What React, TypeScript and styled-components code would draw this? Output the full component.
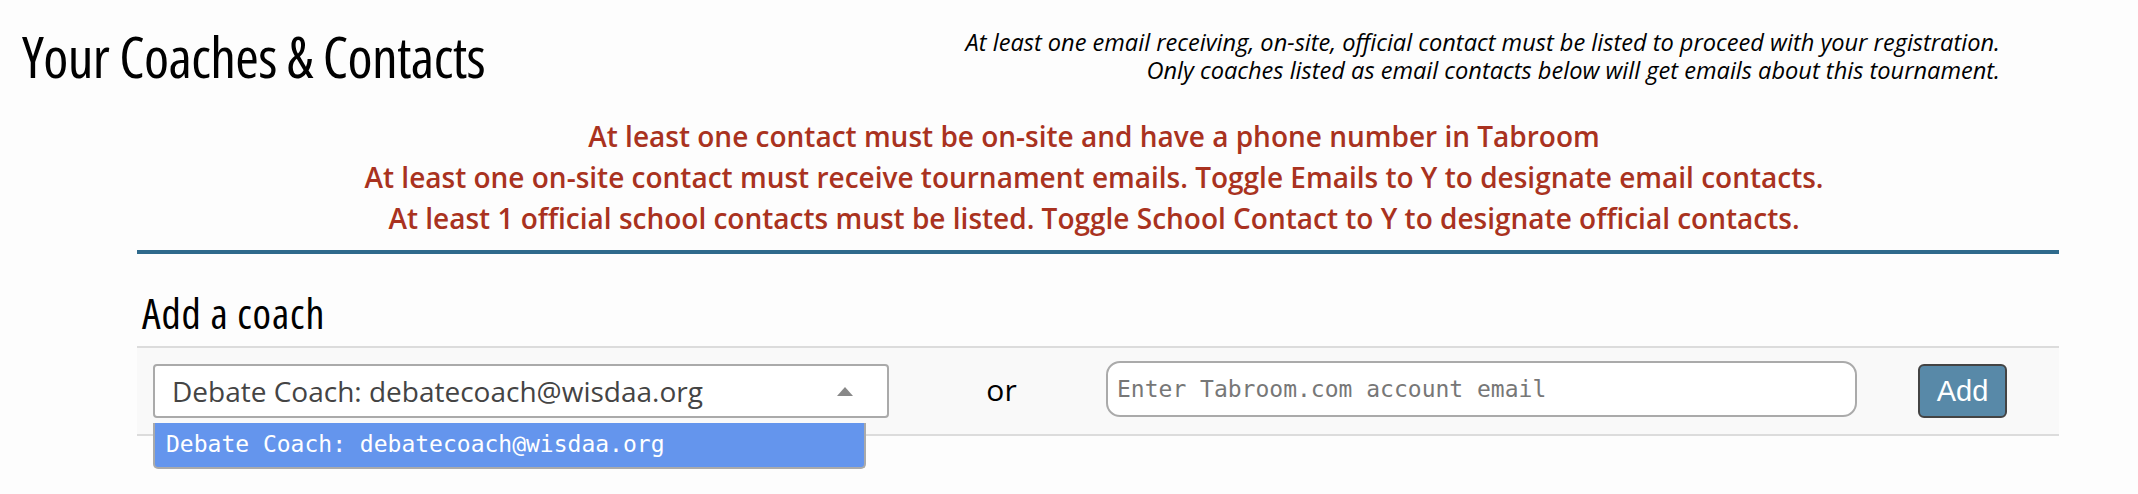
import React from "react";
import styled, { createGlobalStyle } from "styled-components";

const Global = createGlobalStyle`
  html, body { margin: 0; padding: 0; background: #fdfdfd; }
  body { font-family: "Open Sans", "Liberation Sans", sans-serif; color: #000; }
`;

const Page = styled.div`
  width: 2138px;
  min-height: 494px;
  box-sizing: border-box;
  padding-top: 22px;
`;

const Header = styled.div`
  display: flex;
  justify-content: space-between;
  align-items: flex-start;
  padding: 0 138px 0 22px;
`;

const Title = styled.h2`
  margin: 0;
  font-family: "Open Sans", sans-serif;
  font-stretch: 75%;
  font-weight: 400;
  font-size: 57px;
  line-height: 68px;
  letter-spacing: -0.6px;
  color: #000;
`;

const Note = styled.div`
  margin-top: 6px;
  text-align: right;
  font-style: italic;
  font-size: 23.6px;
  line-height: 28px;
  color: #000;
`;

const Content = styled.div`
  width: 1922px;
  margin-left: 137px;
`;

const Warnings = styled.div`
  margin-top: 26px;
  padding: 0 8px 0 0;
  text-align: center;
  color: #a93220;
  font-weight: 600;
  font-size: 28px;
  line-height: 41px;
`;

const Rule = styled.hr`
  margin: 11px 0 0 0;
  border: 0;
  height: 4px;
  background: #2f6a8c;
`;

const SubTitle = styled.h4`
  margin: 34px 0 0 5px;
  font-family: "Open Sans", sans-serif;
  font-stretch: 75%;
  font-weight: 400;
  font-size: 42px;
  line-height: 50px;
  letter-spacing: 0.9px;
`;

const Row = styled.div`
  margin-top: 8px;
  height: 86px;
  display: flex;
  align-items: center;
  padding-left: 16px;
  background: #f9f9f9;
  border-top: 2px solid #dcdcdc;
  border-bottom: 2px solid #dcdcdc;
`;

const SelectBox = styled.div`
  box-sizing: border-box;
  width: 736px;
  height: 54px;
  background: #fff;
  border: 2px solid #aaa;
  border-radius: 4px;
  display: flex;
  align-items: center;
  justify-content: space-between;
  padding: 0 34px 0 17px;
  font-size: 28px;
  color: #444;
  position: relative;
`;

const Arrow = styled.span`
  width: 0;
  height: 0;
  border-left: 8px solid transparent;
  border-right: 8px solid transparent;
  border-bottom: 9px solid #888;
`;

const Dropdown = styled.div`
  position: absolute;
  top: 57px;
  left: -2px;
  z-index: 2;
  box-sizing: border-box;
  width: 713px;
  height: 46px;
  background: #6495ed;
  border: 2px solid #aaa;
  border-top: 0;
  border-radius: 0 0 5px 5px;
  color: #fff;
  font-family: "DejaVu Sans Mono", monospace;
  font-size: 23px;
  line-height: 42px;
  padding-left: 11px;
  white-space: nowrap;
`;

const OrCell = styled.div`
  box-sizing: border-box;
  width: 217px;
  padding: 0 0 4px 8px;
  text-align: center;
  font-size: 30px;
  color: #000;
`;

const EmailInput = styled.input`
  box-sizing: border-box;
  width: 751px;
  height: 56px;
  margin-top: -4px;
  border: 2px solid #aaa;
  border-radius: 14px;
  background: #fff;
  padding: 0 0 0 9px;
  font-family: "DejaVu Sans Mono", monospace;
  font-size: 23px;
  outline: none;
  &::placeholder { color: #777; }
`;

const AddButton = styled.button`
  box-sizing: border-box;
  margin-left: 61px;
  width: 89px;
  height: 54px;
  border: 2px solid #444;
  border-radius: 6px;
  background: #5889a8;
  color: #fff;
  font-family: "Liberation Sans", Arial, sans-serif;
  font-size: 29px;
  padding: 0;
`;

export default function App() {
  return (
    <Page>
      <Global />
      <Header>
        <Title>Your Coaches &amp; Contacts</Title>
        <Note>
          At least one email receiving, on-site, official contact must be listed to proceed with your registration.
          <br />
          Only coaches listed as email contacts below will get emails about this tournament.
        </Note>
      </Header>
      <Content>
        <Warnings>
          <div>At least one contact must be on-site and have a phone number in Tabroom</div>
          <div>At least one on-site contact must receive tournament emails. Toggle Emails to Y to designate email contacts.</div>
          <div>At least 1 official school contacts must be listed. Toggle School Contact to Y to designate official contacts.</div>
        </Warnings>
        <Rule />
        <SubTitle>Add a coach</SubTitle>
        <Row>
          <SelectBox>
            <span>Debate Coach: debatecoach@wisdaa.org</span>
            <Arrow />
            <Dropdown>Debate Coach: debatecoach@wisdaa.org</Dropdown>
          </SelectBox>
          <OrCell>or</OrCell>
          <EmailInput placeholder="Enter Tabroom.com account email" />
          <AddButton>Add</AddButton>
        </Row>
      </Content>
    </Page>
  );
}
